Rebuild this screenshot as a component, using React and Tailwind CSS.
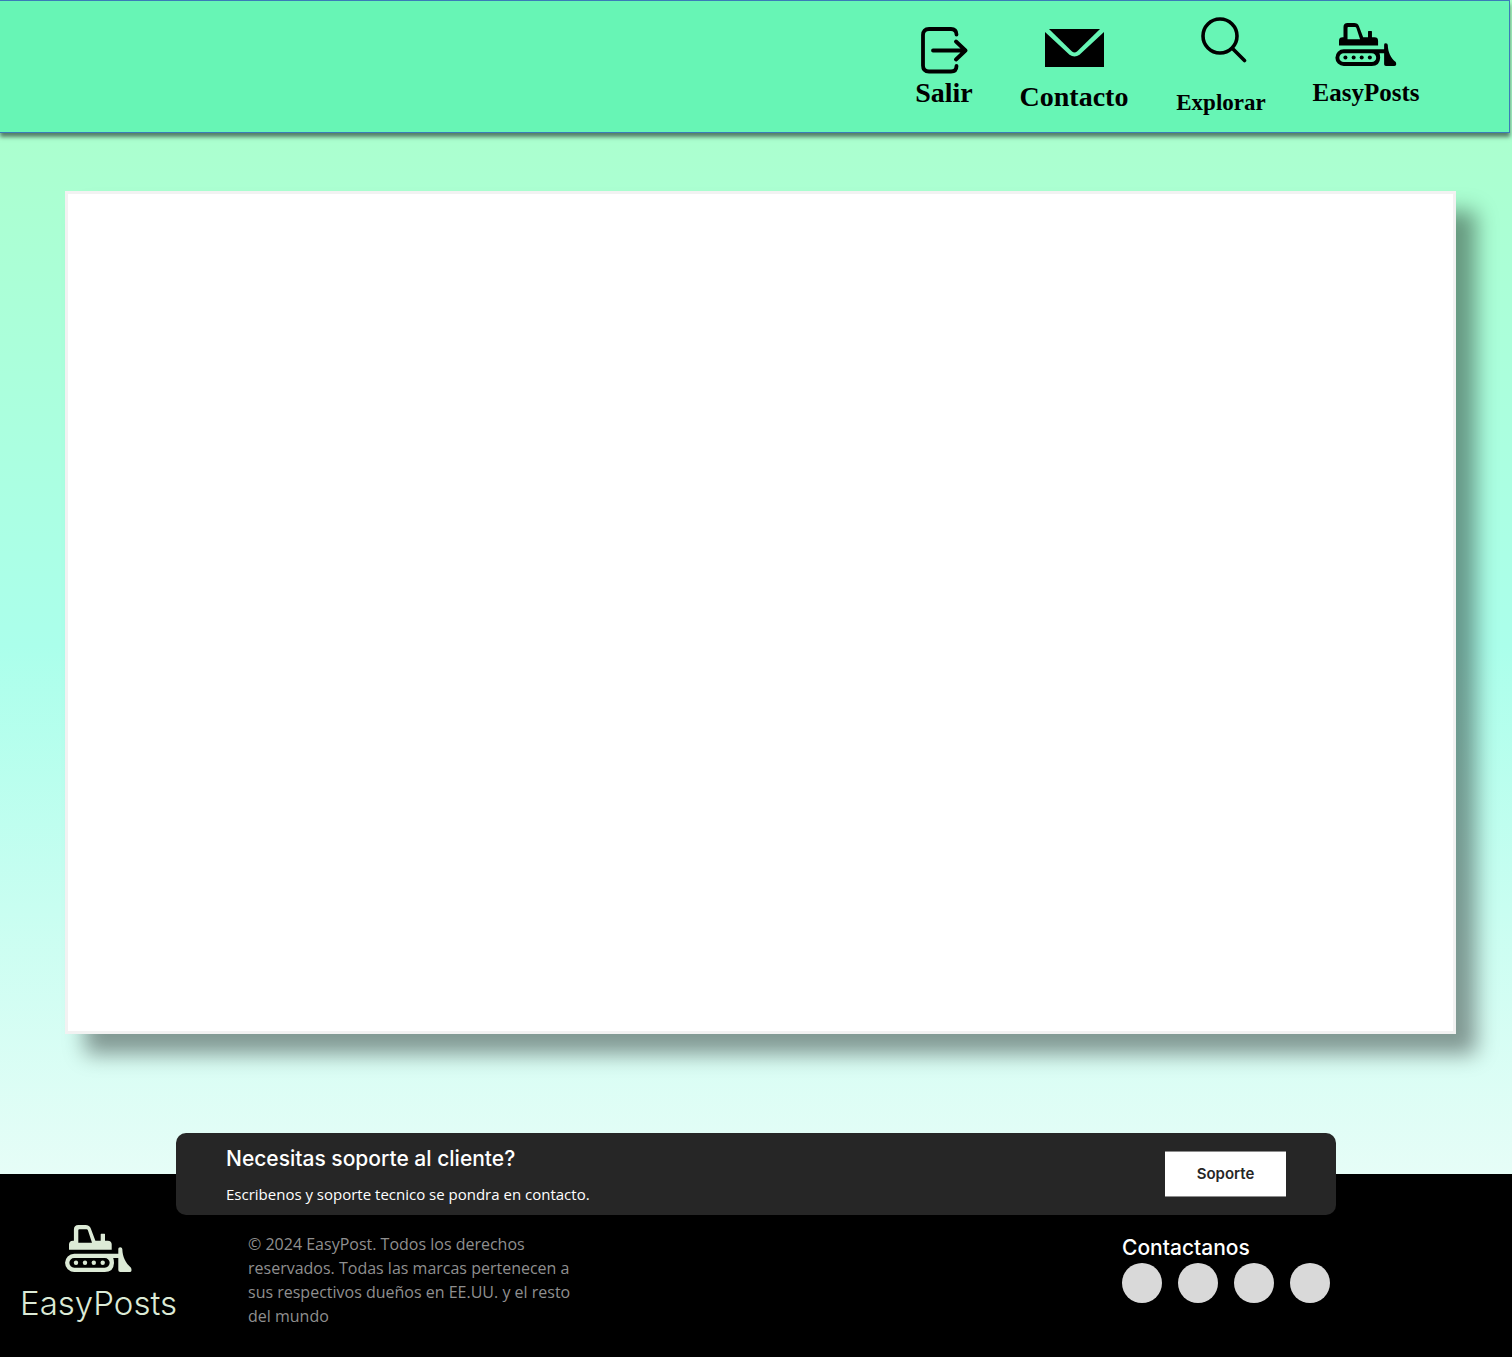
function Bulldozer({ className }) {
  return (
    <svg viewBox="0 0 67 47" fill="currentColor" className={className} aria-hidden="true">
      <path
        fillRule="evenodd"
        d="M4 24.7V19.5Q4 15.7 8 15.7H8.9V4.5Q8.9 0 13.4 0H20.5Q24.600 0 25.800 3.6L30.400 15.7H35.7V9.2Q35.7 8.7 36.2 8.7H39.5Q40 8.7 40 9.2V15.7H42.7Q46.7 15.7 46.7 19.5V24.7ZM13.3 17.8H27L22.9 5.3Q22.5 4.3 21.6 4.3H14.3Q13.3 4.3 13.3 5.3Z"
      />
      <path
        fillRule="evenodd"
        d="M9.2 28.7H53.3V23.8Q53.3 22.2 55.2 22.2Q57.2 22.2 57.3 24C57.6 32 60.5 38 66 42.7Q67.6 47 64.5 47H55.3Q53.3 47 53.3 45V33H48.2Q49 35 49 37.9Q48.6 47 39.8 47H9.2A9.15 9.15 0 0 1 9.2 28.7ZM9.2 33A4.85 4.85 0 0 0 9.2 42.7H39.8A4.85 4.85 0 0 0 39.8 33Z"
      />
      <circle cx="11" cy="37.8" r="2.2" />
      <circle cx="20" cy="37.8" r="2.2" />
      <circle cx="28.8" cy="37.8" r="2.2" />
      <circle cx="37.7" cy="37.8" r="2.2" />
    </svg>
  );
}

function ExitIcon() {
  return (
    <svg
      viewBox="0 0 48 48"
      fill="none"
      stroke="currentColor"
      strokeWidth="3.8"
      strokeLinecap="round"
      strokeLinejoin="round"
      className="h-12 w-12"
      aria-hidden="true"
    >
      <path d="M36.500 8.500Q36.500 3 31 3H9Q3 3 3 9V39.500Q3 45.500 9 45.500H31Q36.500 45.500 36.500 40" />
      <path d="M13 24.500H45.500M36 15.500L45.500 24.500L36 33.500" />
    </svg>
  );
}

function MailIcon() {
  return (
    <svg viewBox="0 0 59 38" fill="currentColor" className="h-[38px] w-[59px]" aria-hidden="true">
      <path d="M4 0H55L32 22.500Q29.500 24.300 27 22.500Z" />
      <path d="M0 3L24.500 25.700Q29.500 29.300 34.500 25.700L59 3V38H0Z" />
    </svg>
  );
}

function SearchIcon() {
  return (
    <svg
      viewBox="0 0 46 46"
      fill="none"
      stroke="currentColor"
      strokeWidth="3.6"
      strokeLinecap="round"
      className="h-[46px] w-[46px]"
      aria-hidden="true"
    >
      <circle cx="19" cy="19" r="17" />
      <path d="M31.500 31.500L43.500 43.500" />
    </svg>
  );
}

const linkClass = "flex flex-col items-center whitespace-nowrap";

export default function App() {
  return (
    <div className="flex min-h-screen flex-col bg-black">
      <div className="flex grow flex-col bg-[linear-gradient(180deg,#abffc8_0%,#abffcf_12%,#abffeb_55%,#e6fdf7_100%)] pb-[140px]">
        <header className="mr-0.5 border border-l-0 border-[#3a7cb8] bg-[#67f5b5] shadow-[0_4px_4px_rgba(0,0,0,0.5)]">
          <nav className="flex h-[131px] items-start justify-end gap-[46px] pr-[89px] font-['Liberation_Serif',serif] font-bold text-black">
            <a href="#salir" className={`${linkClass} w-14 pt-[25px] text-[28px] leading-8`}>
              <ExitIcon />
              <span className="pt-[3px]">Salir</span>
            </a>
            <a href="#contacto" className={`${linkClass} w-28 pt-7 text-[28px] leading-8`}>
              <MailIcon />
              <span className="pt-3.5">Contacto</span>
            </a>
            <a href="#explorar" className={`${linkClass} w-[90px] pt-4 text-[23px] leading-8`}>
              <span className="pl-1.5">
                <SearchIcon />
              </span>
              <span className="pt-6">Explorar</span>
            </a>
            <a href="#inicio" className={`${linkClass} w-[108px] pt-[22px] text-[25px] leading-8`}>
              <Bulldozer className="h-[43px] w-[62px]" />
              <span className="pt-[11px]">EasyPosts</span>
            </a>
          </nav>
        </header>
        <main className="mr-14 mt-[58px] ml-[65px] min-h-[843px] border-[3px] border-[#f2f2f2] bg-white shadow-[20px_20px_20px_rgba(0,0,0,0.4)]" />
      </div>

      <footer className="bg-black font-['Open_Sans',sans-serif] text-white">
        <section className="relative mx-44 -mt-[41px] flex h-[82px] items-center justify-between rounded-[10px] bg-[#262626] px-[50px]">
          <div>
            <h2 className="pt-px font-['Inter',sans-serif] text-[21px] leading-8 font-medium">
              Necesitas soporte al cliente?
            </h2>
            <p className="pt-[7px] text-[15px] leading-6">Escribenos y soporte tecnico se pondra en contacto.</p>
          </div>
          <button
            type="button"
            className="h-[46px] w-[121px] border-y border-[#8c8c8c] bg-white font-['Inter',sans-serif] text-[15px] font-semibold text-[#262626]"
          >
            Soporte
          </button>
        </section>
        <div className="flex items-start pr-[182px] pb-[29px]">
          <a href="#inicio" className="flex w-[197px] shrink-0 flex-col items-center pt-2.5 text-[#dcead6]">
            <Bulldozer className="h-[47px] w-[67px]" />
            <span className="pt-[11px] font-['Inter',sans-serif] text-[33px] leading-10 font-light">EasyPosts</span>
          </a>
          <p className="ml-[51px] w-[340px] pt-[17px] text-base leading-6 text-[#8f8f8f]">
            © 2024 EasyPost. Todos los derechos reservados. Todas las marcas pertenecen a sus respectivos dueños en
            EE.UU. y el resto del mundo
          </p>
          <div className="ml-auto pt-[18px]">
            <h2 className="font-['Inter',sans-serif] text-[21px] leading-[30px] font-medium">Contactanos</h2>
            <div className="flex gap-4">
              <a href="#facebook" aria-label="Facebook" className="size-10 rounded-full bg-[#d9d9d9]" />
              <a href="#instagram" aria-label="Instagram" className="size-10 rounded-full bg-[#d9d9d9]" />
              <a href="#twitter" aria-label="Twitter" className="size-10 rounded-full bg-[#d9d9d9]" />
              <a href="#youtube" aria-label="YouTube" className="size-10 rounded-full bg-[#d9d9d9]" />
            </div>
          </div>
        </div>
      </footer>
    </div>
  );
}
